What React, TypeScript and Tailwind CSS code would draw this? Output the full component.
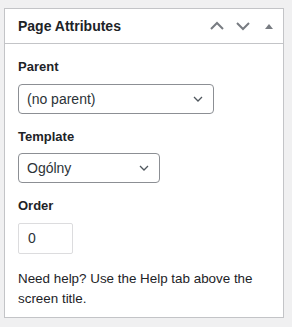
import React from 'react';

const SelectChevron = () => (
  <svg width="10" height="6" viewBox="0 0 10 6" className="shrink-0">
    <path d="M1 1l4 4 4-4" fill="none" stroke="#50575e" strokeWidth="1.3" />
  </svg>
);

const HeaderIcons = () => (
  <div className="flex items-center">
    {/* mover para cima */}
    <svg width="16" height="10" viewBox="0 0 16 10" className="mr-[10px]">
      <path d="M2 8l6-6 6 6" fill="none" stroke="#787c82" strokeWidth="2" />
    </svg>
    {/* mover para baixo */}
    <svg width="16" height="10" viewBox="0 0 16 10" className="mr-[13px]">
      <path d="M2 2l6 6 6-6" fill="none" stroke="#787c82" strokeWidth="2" />
    </svg>
    {/* recolher */}
    <svg width="10" height="6" viewBox="0 0 10 6">
      <path d="M1 6l4-5 4 5z" fill="#787c82" />
    </svg>
  </div>
);

export default function App() {
  return (
    <div
      className="w-[292px] h-[327px] bg-[#f0f0f1] pt-[8px] pl-[4px]"
      style={{ fontFamily: '"Liberation Sans", Arial, sans-serif' }}
    >
      <div className="w-[280px] h-[310px] bg-white border border-[#c3c4c7] flex flex-col">
        {/* Cabeçalho */}
        <div className="h-[35px] border-b border-[#c3c4c7] flex items-center justify-between pl-[13px] pr-[9px]">
          <h2 className="text-[14px] font-semibold text-[#1d2327] leading-none">Page Attributes</h2>
          <HeaderIcons />
        </div>

        {/* Conteúdo */}
        <div className="pl-[13px] pt-[13px] text-[#1d2327]">
          <div className="text-[13px] font-semibold leading-[20px]">Parent</div>
          <div className="mt-[7px] w-[196px] h-[30px] border border-[#8c8f94] rounded-[4px] flex items-center justify-between pl-[8px] pr-[10px] text-[14px] text-[#2c3338]">
            <span>(no parent)</span>
            <SelectChevron />
          </div>

          <div className="mt-[13px] text-[13px] font-semibold leading-[20px]">Template</div>
          <div className="mt-[6px] w-[142px] h-[30px] border border-[#8c8f94] rounded-[4px] flex items-center justify-between pl-[8px] pr-[10px] text-[14px] text-[#2c3338]">
            <span>Ogólny</span>
            <SelectChevron />
          </div>

          <div className="mt-[13px] text-[13px] font-semibold leading-[20px]">Order</div>
          <div className="mt-[7px] w-[55px] h-[31px] border border-[#dcdcde] rounded-[2px] flex items-center pl-[9px] text-[14px] text-[#2c3338]">
            0
          </div>

          <p className="mt-[15px] text-[13.4px] leading-[20px] text-[#1d2327]">
            Need help? Use the Help tab above the
            <br />
            screen title.
          </p>
        </div>
      </div>
    </div>
  );
}
